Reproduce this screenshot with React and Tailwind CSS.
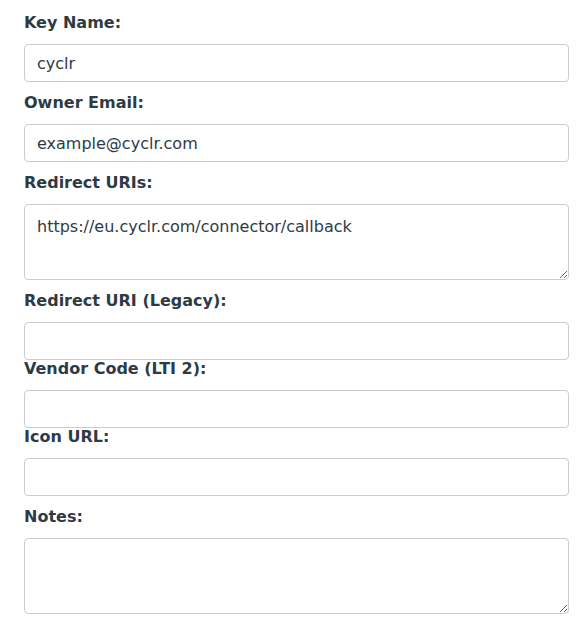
import React from "react";

const font = { fontFamily: '"DejaVu Sans", sans-serif' };

function Label({ children, className = "" }) {
  return (
    <label className={`block text-[16px] font-bold leading-[24px] text-[#2d3b45] mb-[9px] ${className}`}>
      {children}
    </label>
  );
}

function Input({ value = "" }) {
  return (
    <input
      type="text"
      defaultValue={value}
      className="block w-[545px] h-[38px] px-3 border border-[#c6cdd3] rounded-[4px] bg-white text-[16px] text-[#2d3b45] outline-none"
      style={font}
    />
  );
}

function TextArea({ value = "" }) {
  return (
    <textarea
      defaultValue={value}
      className="block w-[545px] h-[76px] px-3 pt-[10px] pb-[6px] border border-[#c6cdd3] rounded-[4px] bg-white text-[16px] leading-[24px] text-[#2d3b45] outline-none"
      style={font}
    />
  );
}

export default function App() {
  return (
    <div className="w-[588px] h-[642px] bg-white pl-6 pt-[11px]" style={font}>
      <Label>Key Name:</Label>
      <Input value="cyclr" />
      <Label className="mt-[9px]">Owner Email:</Label>
      <Input value="example@cyclr.com" />
      <Label className="mt-[9px]">Redirect URIs:</Label>
      <TextArea value="https://eu.cyclr.com/connector/callback" />
      <Label className="mt-[9px]">Redirect URI (Legacy):</Label>
      <Input />
      <Label className="mt-[-3px]">Vendor Code (LTI 2):</Label>
      <Input />
      <Label className="mt-[-3px]">Icon URL:</Label>
      <Input />
      <Label className="mt-[9px]">Notes:</Label>
      <TextArea />
    </div>
  );
}
